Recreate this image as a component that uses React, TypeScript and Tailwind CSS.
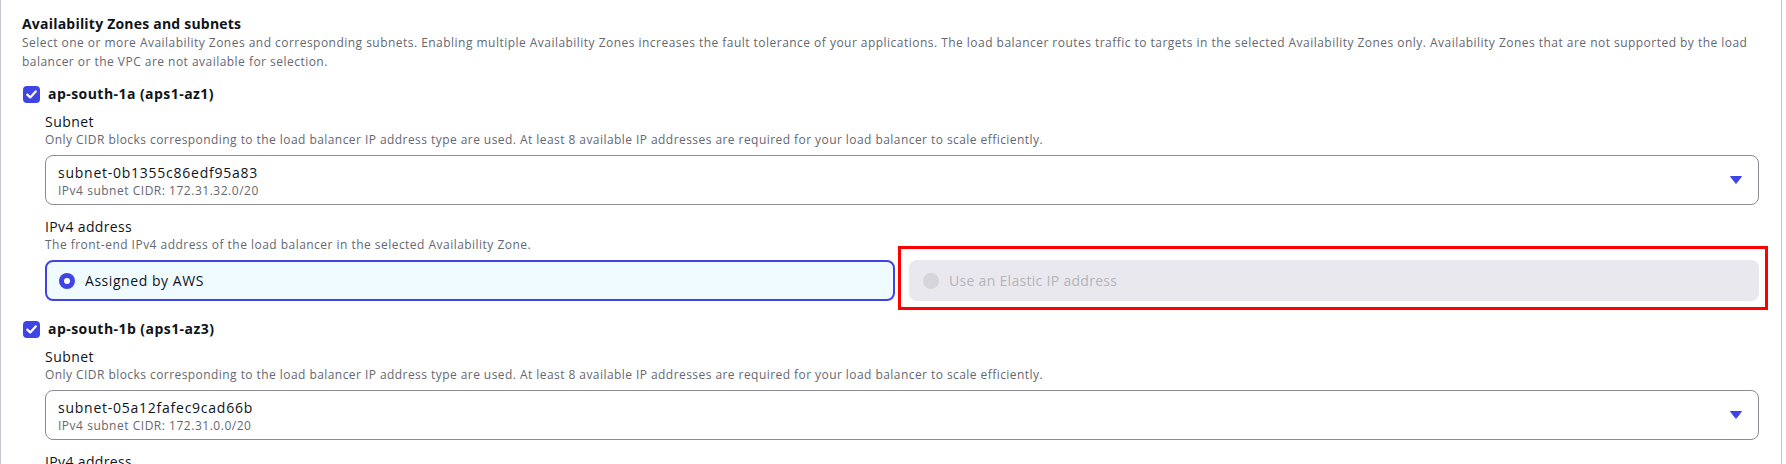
import React from "react";

const ZONES = [
  { name: "ap-south-1a (aps1-az1)", subnet: "subnet-0b1355c86edf95a83", cidr: "172.31.32.0/20", mark: true },
  { name: "ap-south-1b (aps1-az3)", subnet: "subnet-05a12fafec9cad66b", cidr: "172.31.0.0/20", mark: false },
];

function Checkbox() {
  return (
    <span className="ml-px flex h-[17px] w-[17px] shrink-0 items-center justify-center rounded-[4px] bg-[#3f45e4]">
      <svg width="11" height="9" viewBox="0 0 11 9" fill="none">
        <path d="M1.3 4.6 4.2 7.4 9.7 1.4" stroke="white" strokeWidth="2.2" strokeLinecap="round" strokeLinejoin="round" />
      </svg>
    </span>
  );
}

type ZoneProps = { name: string; subnet: string; cidr: string; mark: boolean; first: boolean };

// The red frame round the Elastic IP option is an annotation on the screenshot,
// so it sits over the card instead of taking part in the layout.
function Zone({ name, subnet, cidr, mark, first }: ZoneProps) {
  return (
    <div className={first ? "mt-[13px]" : "mt-[18px]"}>
      <label className="flex h-5 items-center gap-[8px]">
        <Checkbox />
        <span className="text-[14px] font-bold leading-5 tracking-[0.45px] text-[#0f141a]">{name}</span>
      </label>

      <div className="ml-[23px]">
        <div className="mt-[9px] text-[14px] leading-[18px] tracking-[0.45px] text-[#0f141a]">Subnet</div>
        <p className="mt-px text-[12px] leading-4 tracking-[0.44px] text-[#656871]">
          Only CIDR blocks corresponding to the load balancer IP address type are used. At least 8 available IP addresses are required for your load balancer to scale efficiently.
        </p>

        <div className="mt-[7px] flex h-[50px] rounded-lg border border-[#8c8c94] bg-white pl-3 pr-4">
          <div className="flex-1 pt-[7px]">
            <div className="text-[14px] leading-5 tracking-[0.75px] text-[#0f141a]">{subnet}</div>
            <div className="text-[12px] leading-4 tracking-[0.52px] text-[#656871]">IPv4 subnet CIDR: {cidr}</div>
          </div>
          <svg className="self-center" width="12" height="8" viewBox="0 0 12 8">
            <path d="M0.5 0.5h11L6 7.5z" fill="#3f45e4" stroke="#3f45e4" strokeLinejoin="round" />
          </svg>
        </div>

        <div className="mt-[13px] text-[14px] leading-[18px] tracking-[0.36px] text-[#0f141a]">IPv4 address</div>
        <p className="mt-px text-[12px] leading-4 tracking-[0.47px] text-[#656871]">
          The front-end IPv4 address of the load balancer in the selected Availability Zone.
        </p>

        <div className="mt-[7px] grid grid-cols-2 gap-[14px]">
          <div className="flex h-[41px] items-center gap-[10px] rounded-lg border-2 border-[#3f45e4] bg-[#f0fbff] px-3">
            <span className="flex h-4 w-4 items-center justify-center rounded-full bg-[#3f45e4]">
              <span className="h-[6px] w-[6px] rounded-full bg-white" />
            </span>
            <span className="text-[14px] tracking-[0.55px] text-[#0f141a]">Assigned by AWS</span>
          </div>
          <div className="relative flex h-[41px] items-center gap-[10px] rounded-lg border-2 border-[#eae8ef] bg-[#eae8ef] px-3">
            <span className="h-4 w-4 rounded-full bg-[#d6d5dc]" />
            <span className="text-[14px] tracking-[0.3px] text-[#b4b4bb]">Use an Elastic IP address</span>
            {mark && (
              <span className="pointer-events-none absolute -top-[16px] -right-[11px] -bottom-[11px] -left-[13px] border-[3px] border-[#ff0000]" />
            )}
          </div>
        </div>
      </div>
    </div>
  );
}

export default function App() {
  return (
    <div
      className="h-[464px] w-[1782px] overflow-hidden border-x border-[#c6c6cd] bg-white pl-[21px] pr-[22px] pt-[15px]"
      style={{ fontFamily: '"Open Sans", "Noto Sans", sans-serif' }}
    >
      <h2 className="text-[14px] font-bold leading-[18px] tracking-[0.21px] text-[#0f141a]">Availability Zones and subnets</h2>
      <p className="mt-px text-[12px] leading-[18.5px] tracking-[0.47px] text-[#656871]">
        Select one or more Availability Zones and corresponding subnets. Enabling multiple Availability Zones increases the fault tolerance of your applications. The load balancer routes traffic to targets in the selected Availability Zones only. Availability Zones that are not supported by the load balancer or the VPC are not available for selection.
      </p>
      {ZONES.map((z, i) => (
        <Zone key={z.name} {...z} first={i === 0} />
      ))}
    </div>
  );
}
